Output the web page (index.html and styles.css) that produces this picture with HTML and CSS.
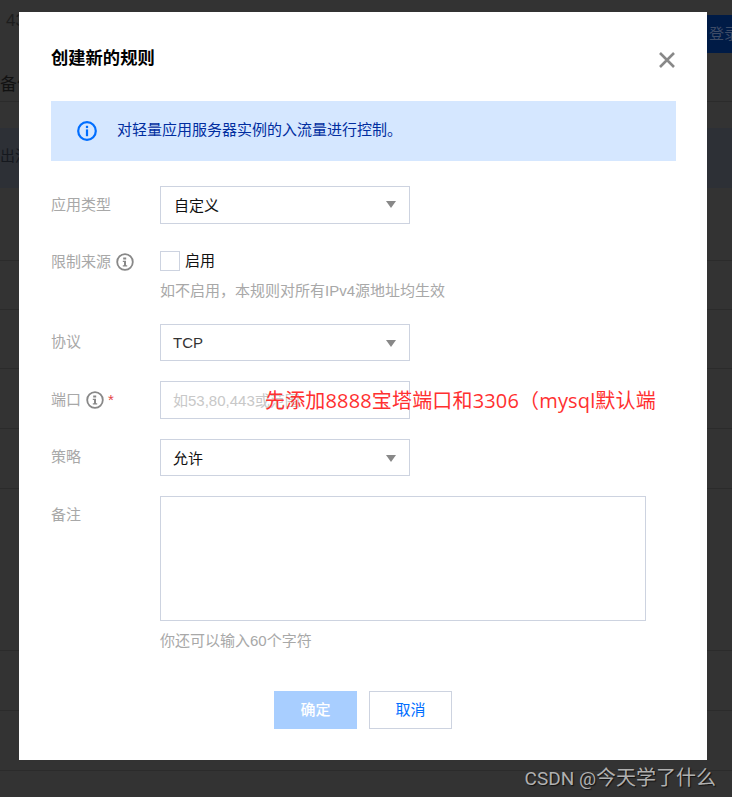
FILE: index.html
```html
<!DOCTYPE html>
<html lang="zh-CN">
<head>
<meta charset="utf-8">
<title>创建新的规则</title>
<link rel="stylesheet" href="styles.css">
</head>
<body>
<div class="page">
  <div class="bg-top"><span class="bg-43">43</span></div>
  <div class="bg-login">登录</div>
  <div class="bg-head">备份</div>
  <div class="bg-tab">出流</div>
  <div class="bg-row r1"></div>
  <div class="bg-row r2"></div>
  <div class="bg-row r3"></div>
  <div class="bg-row r4"></div>
  <div class="bg-row r5"></div>
  <div class="bg-row r6"></div>
  <div class="bg-row r7"></div>
  <div class="bg-row r8"></div>
  <div class="bg-row r9"></div>
</div>

<div class="dialog">
  <header class="dialog-head">
    <h1 class="dialog-title">创建新的规则</h1>
    <svg class="close" width="16" height="16" viewBox="0 0 16 16"><path d="M1 1L15 15M15 1L1 15" stroke="#888" stroke-width="2.6" fill="none"/></svg>
  </header>

  <div class="alert">
    <svg class="alert-icon" width="20" height="20" viewBox="0 0 20 20"><circle cx="10" cy="10" r="8.8" fill="none" stroke="#006eff" stroke-width="2.2"/><rect x="8.9" y="4.8" width="2.2" height="2.3" fill="#006eff"/><rect x="8.9" y="8.4" width="2.2" height="6.8" fill="#006eff"/></svg>
    <span class="alert-text">对轻量应用服务器实例的入流量进行控制。</span>
  </div>

  <form class="form">
    <div class="row row-type">
      <div class="label">应用类型</div>
      <div class="select h38"><span>自定义</span><i class="caret"></i></div>
    </div>

    <div class="row row-source">
      <div class="label">限制来源
        <svg class="tip" width="18" height="18" viewBox="0 0 18 18"><circle cx="9" cy="9" r="7.8" fill="none" stroke="#888" stroke-width="1.8"/><path d="M7.2 4.6h3v1.9h-3zM6.8 7.7h3.2v4.6h1.2v1.3H6.8v-1.3H8V9H6.8z" fill="#888"/></svg>
      </div>
      <div class="control">
        <label class="check"><span class="box"></span><span>启用</span></label>
        <p class="hint hint-source">如不启用，本规则对所有IPv4源地址均生效</p>
      </div>
    </div>

    <div class="row row-protocol">
      <div class="label">协议</div>
      <div class="select h37 select-tcp"><span>TCP</span><i class="caret"></i></div>
    </div>

    <div class="row row-port">
      <div class="label">端口
        <svg class="tip" width="18" height="18" viewBox="0 0 18 18"><circle cx="9" cy="9" r="7.8" fill="none" stroke="#888" stroke-width="1.8"/><path d="M7.2 4.6h3v1.9h-3zM6.8 7.7h3.2v4.6h1.2v1.3H6.8v-1.3H8V9H6.8z" fill="#888"/></svg>
        <span class="req">*</span>
      </div>
      <div class="input"><span>如53,80,443或范围</span></div>
    </div>

    <div class="row row-policy">
      <div class="label">策略</div>
      <div class="select h37 select-policy"><span>允许</span><i class="caret"></i></div>
    </div>

    <div class="row row-note">
      <div class="label">备注</div>
      <div class="control">
        <div class="textarea"></div>
        <p class="hint hint-note">你还可以输入60个字符</p>
      </div>
    </div>

    <div class="actions">
      <button type="button" class="btn btn-primary">确定</button>
      <button type="button" class="btn btn-default">取消</button>
    </div>
  </form>
</div>

<div class="annotation">先添加8888宝塔端口和3306（mysql默认端</div>
<div class="watermark"><span class="wm-latin">CSDN @</span>今天学了什么</div>
</body>
</html>
```

FILE: styles.css
```css
* { box-sizing: border-box; }
html, body { margin: 0; padding: 0; }
body {
  width: 732px;
  height: 797px;
  overflow: hidden;
  background: #333333;
  font-family: "Liberation Sans", "Noto Sans CJK SC", sans-serif;
  font-size: 15px;
  position: relative;
}
.page { height: 797px; display: flex; flex-direction: column; position: relative; }
.bg-top { color: #1d1d1d; font-size: 17px; line-height: 20px; padding: 11px 0 0 6px; height: 72px; }
.bg-login {
  position: absolute; left: 707px; top: 15px; width: 25px; height: 38px; padding-left: 2px;
  background: #001b46; color: #3f4c66; font-size: 15px; line-height: 38px; white-space: nowrap; overflow: hidden;
}
.bg-head { position: absolute; left: 0; top: 73px; font-size: 17px; color: #111; line-height: 24px; width: 19px; overflow: hidden; white-space: nowrap; }
.bg-tab {
  position: absolute; left: 0; top: 128px; width: 732px; height: 60px;
  background: #2d3036; color: #15181e; font-size: 15px; line-height: 56px; white-space: nowrap;
}
.bg-row { position: absolute; left: 0; width: 732px; height: 1px; background: #2b2b2b; }
.r1 { top: 101px; }
.r2 { top: 260px; }
.r3 { top: 309px; }
.r4 { top: 368px; }
.r5 { top: 428px; }
.r6 { top: 488px; }
.r7 { top: 650px; }
.r8 { top: 710px; }
.r9 { top: 770px; }

.dialog {
  position: absolute; left: 19px; top: 12px; width: 688px; height: 748px;
  background: #fff; padding: 0 31px 0 32px;
}
.dialog-head { height: 89px; display: flex; justify-content: space-between; }
.dialog-title {
  margin: 33px 0 0; font-size: 17.3px; line-height: 24px; font-weight: 700; color: #000;
  font-family: "Noto Sans CJK SC", sans-serif;
}
.close { margin: 40px 0 0; position: relative; left: -1px; }
.alert {
  height: 60px; background: #d5e7ff; display: flex; align-items: center; padding-left: 26px;
}
.alert-icon { flex: none; }
.alert-text { margin-left: 20px; color: #002da0; font-size: 15px; line-height: 20px; position: relative; top: -1px; }

.form { display: flex; flex-direction: column; }
.row { display: flex; align-items: flex-start; }
.label {
  width: 109px; flex: none; color: #a8a8a8; display: flex; align-items: center; gap: 5px;
  font-size: 15px; line-height: 22px; white-space: nowrap;
}
.row-type { margin-top: 25px; }
.row-source { margin-top: 27px; }
.row-protocol { margin-top: 22px; }
.row-port { margin-top: 20px; }
.row-policy { margin-top: 20px; }
.row-note { margin-top: 20px; }
.row-type .label { padding-top: 8px; }
.row-source .label { padding-top: 0; height: 22px; }
.row-protocol .label { padding-top: 7px; }
.row-port .label { padding-top: 8px; }
.row-policy .label { padding-top: 7px; }
.row-note .label { padding-top: 8px; }
.tip { flex: none; }
.req { color: #e54545; font-size: 15px; margin-left: -1px; }

.select, .input {
  width: 250px; border: 1px solid #cdd3e0; display: flex; align-items: center; justify-content: space-between;
  padding: 0 13px 2px 13px; background: #fff; color: #111;
  font-size: 15px;
}
.h38 { height: 38px; }
.h37 { height: 37px; }
.select-tcp { padding-left: 12px; padding-bottom: 0; color: #333; }
.select-policy { padding-left: 12px; padding-bottom: 0; }
.caret {
  width: 0; height: 0; border-left: 5.5px solid transparent; border-right: 5.5px solid transparent;
  border-top: 7px solid #888; margin-right: 0; margin-top: 1px;
}
.input { height: 38px; padding: 0 12px 2px; color: #c8c8c8; overflow: hidden; white-space: nowrap; justify-content: flex-start; }
.control { display: flex; flex-direction: column; }
.check { display: flex; align-items: center; gap: 5px; color: #111; line-height: 20px; }
.box { width: 20px; height: 20px; border: 1px solid #cdd3e0; background: #fff; }
.hint { margin: 0; color: #a8a8a8; font-size: 15px; line-height: 22px; white-space: nowrap; }
.hint-source { margin-top: 9px; }
.hint-note { margin-top: 9px; }
.textarea { width: 486px; height: 125px; border: 1px solid #cdd3e0; }

.actions { display: flex; justify-content: flex-start; gap: 12px; margin-top: 39px; padding-left: 223px; }
.btn {
  width: 83px; height: 38px; font-family: "Liberation Sans", "Noto Sans CJK SC", sans-serif; font-size: 15px; padding: 0 0 4px;
  border: 1px solid transparent; background: #fff;
}
.btn-primary { background: #a8ceff; color: #fff; font-weight: 500; }
.btn-default { border-color: #cdd3e0; color: #006eff; }

.annotation {
  position: absolute; left: 265px; top: 386px; color: #ff3030; font-size: 20px; line-height: 30px; white-space: nowrap;
  letter-spacing: 0.16px;
  font-family: "Open Sans", "Noto Sans CJK SC", sans-serif;
}
.watermark {
  position: absolute; right: 16px; top: 763px; color: #b0b0b0; font-size: 20px; line-height: 28px; white-space: nowrap;
  font-family: "Noto Sans CJK SC", sans-serif;
  text-shadow: 1px 1px 1px #111;
}
.wm-latin { font-family: Roboto, sans-serif; font-size: 19px; }
```
